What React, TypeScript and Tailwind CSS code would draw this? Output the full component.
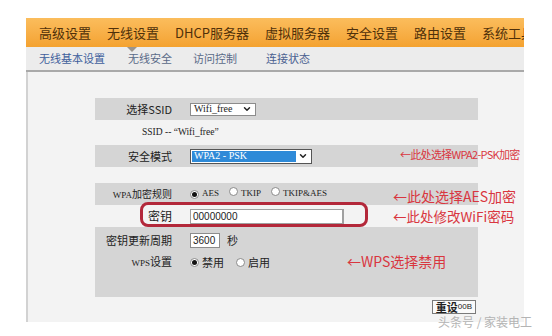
import { ChevronDown } from "lucide-react";

const cjk = { fontFamily: '"Noto Sans CJK SC", "Noto Sans", sans-serif' };
const serif = { fontFamily: '"Liberation Serif", "Noto Sans CJK SC", serif' };

const Radio = ({ on }: { on?: boolean }) => (
  <span className="inline-flex w-[9px] h-[9px] rounded-full border border-[#8a8a8a] bg-white items-center justify-center shrink-0">
    {on && <span className="w-[5px] h-[5px] rounded-full bg-[#111]"></span>}
  </span>
);

const Note = ({ text, className }: { text: string; className: string }) => (
  <div className={"absolute text-[#d9363f] whitespace-nowrap leading-none " + className} style={cjk}>
    {text}
  </div>
);

const App = () => {
  const mainNav = ["高级设置", "无线设置", "DHCP服务器", "虚拟服务器", "安全设置", "路由设置", "系统工具"];
  return (
    <div className="w-[552px] h-[336px] bg-white overflow-hidden relative" style={cjk}>
      <div className="ml-[26px] mt-[18px] w-[498px]">
        {/* top nav */}
        <div className="h-[29px] bg-gradient-to-b from-[#fbbd5c] to-[#f4a22f] flex items-center pl-[13px] gap-[16px] overflow-hidden whitespace-nowrap">
          {mainNav.map((n) => (
            <span key={n} className="text-[13px] text-[#4f300a] leading-none">
              {n}
            </span>
          ))}
        </div>
        {/* sub nav */}
        <div className="h-[25px] bg-[#ececec] border-b-2 border-[#a9a9a9] flex items-center text-[11px] leading-none relative">
          <span className="absolute left-[101px] top-0 w-0 h-0 border-l-[5px] border-r-[5px] border-t-[5px] border-l-transparent border-r-transparent border-t-[#9a948c]"></span>
          <span className="ml-[13px] text-[#3f5f9c]">无线基本设置</span>
          <span className="ml-[23px] text-[#5a6a88]">无线安全</span>
          <span className="ml-[21px] text-[#5a6a88]">访问控制</span>
          <span className="ml-[29px] text-[#4a6090]">连接状态</span>
        </div>
        {/* content */}
        <div className="h-[250px] bg-[#f3f3f3] border-l-2 border-[#d2d2d2] pl-[67px] pt-[26px] relative text-[11px] text-[#222]">
          <div className="w-[383px]">
            <div className="h-[22px] bg-[#d5d5d5] flex items-center">
              <div className="w-[77px] text-right">选择SSID</div>
              <div className="ml-[18px] w-[66px] h-[13px] bg-white border border-[#8c8c8c] flex items-center justify-between px-[3px]">
                <span className="text-[10px] leading-none" style={serif}>Wifi_free</span>
                <ChevronDown size={10} strokeWidth={3.5} color="#222" />
              </div>
            </div>
            <div className="h-[25px] flex items-center pl-[47px] text-[9.5px]" style={serif}>
              SSID -- “Wifi_free”
            </div>
            <div className="h-[22px] bg-[#d5d5d5] flex items-center">
              <div className="w-[77px] text-right">安全模式</div>
              <div className="ml-[18px] w-[122px] h-[15px] bg-white border border-[#555] flex items-center p-[1px]">
                <div className="flex-1 h-full bg-[#2e8ad8] text-white text-[10px] leading-none flex items-center pl-[2px]" style={serif}>
                  WPA2 - PSK
                </div>
                <div className="w-[14px] flex justify-center">
                  <ChevronDown size={10} strokeWidth={3.5} color="#222" />
                </div>
              </div>
            </div>
            <div className="h-[16px]"></div>
            <div className="h-[22px] bg-[#d5d5d5] flex items-center">
              <div className="w-[77px] text-right text-[10px]">
                <span className="text-[9px]" style={serif}>WPA</span>加密规则
              </div>
              <div className="ml-[18px] flex items-center text-[9px]" style={serif}>
                <Radio on />
                <span className="ml-[3px]">AES</span>
                <span className="ml-[10px]"><Radio /></span>
                <span className="ml-[3px]">TKIP</span>
                <span className="ml-[10px]"><Radio /></span>
                <span className="ml-[3px]">TKIP&amp;AES</span>
              </div>
            </div>
            <div className="h-[22px] flex items-center">
              <div className="w-[77px] text-right text-[12px]">密钥</div>
              <div className="ml-[18px] w-[153px] h-[15px] bg-white border border-[#a0a0a0] flex items-center px-[2px] text-[10px]" style={{ fontFamily: '"Liberation Sans", sans-serif' }}>
                00000000
              </div>
              <div className="w-[1px] h-[15px] bg-[#a0a0a0]"></div>
            </div>
            <div className="h-[70px] bg-[#d5d5d5] pt-[4px]">
              <div className="h-[18px] flex items-center">
                <div className="w-[77px] text-right">密钥更新周期</div>
                <div className="ml-[18px] w-[30px] h-[15px] bg-white border border-[#8c8c8c] flex items-center px-[2px] text-[10px]" style={{ fontFamily: '"Liberation Sans", sans-serif' }}>
                  3600
                </div>
                <span className="ml-[7px]">秒</span>
              </div>
              <div className="h-[24px] flex items-center mt-[1px]">
                <div className="w-[77px] text-right">
                  <span className="text-[9px]" style={serif}>WPS</span>设置
                </div>
                <div className="ml-[18px] flex items-center">
                  <Radio on />
                  <span className="ml-[3px]">禁用</span>
                  <span className="ml-[12px]"><Radio /></span>
                  <span className="ml-[3px]">启用</span>
                </div>
              </div>
            </div>
            <div className="flex justify-end mt-[3px] pr-[2px]">
              <div className="h-[14px] px-[3px] bg-[#fafafa] border border-[#7a7a7a] flex items-center text-[11px] leading-none font-bold text-[#222]">
                重设<span className="text-[8px] font-normal" style={{ fontFamily: '"Liberation Sans", sans-serif' }}>00B</span>
              </div>
            </div>
          </div>

          {/* red outline and annotations */}
          <div className="absolute left-[112px] top-[130px] w-[228px] h-[25px] border-[3px] border-[#b3283a] rounded-[8px]"></div>
          <Note text="←此处选择WPA2-PSK加密" className="left-[372px] top-[77px] text-[11px] tracking-[-0.7px]" />
          <Note text="←此处选择AES加密" className="left-[365px] top-[117px] text-[14px]" />
          <Note text="←此处修改WiFi密码" className="left-[365px] top-[138px] text-[13.5px]" />
          <Note text="←WPS选择禁用" className="left-[319px] top-[182px] text-[14px]" />
        </div>
      </div>
      <div className="absolute left-[438px] top-[316px] text-[12px] text-[#b4b4b4] leading-none whitespace-nowrap">
        头条号 / 家装电工
      </div>
    </div>
  );
};

export default App;
